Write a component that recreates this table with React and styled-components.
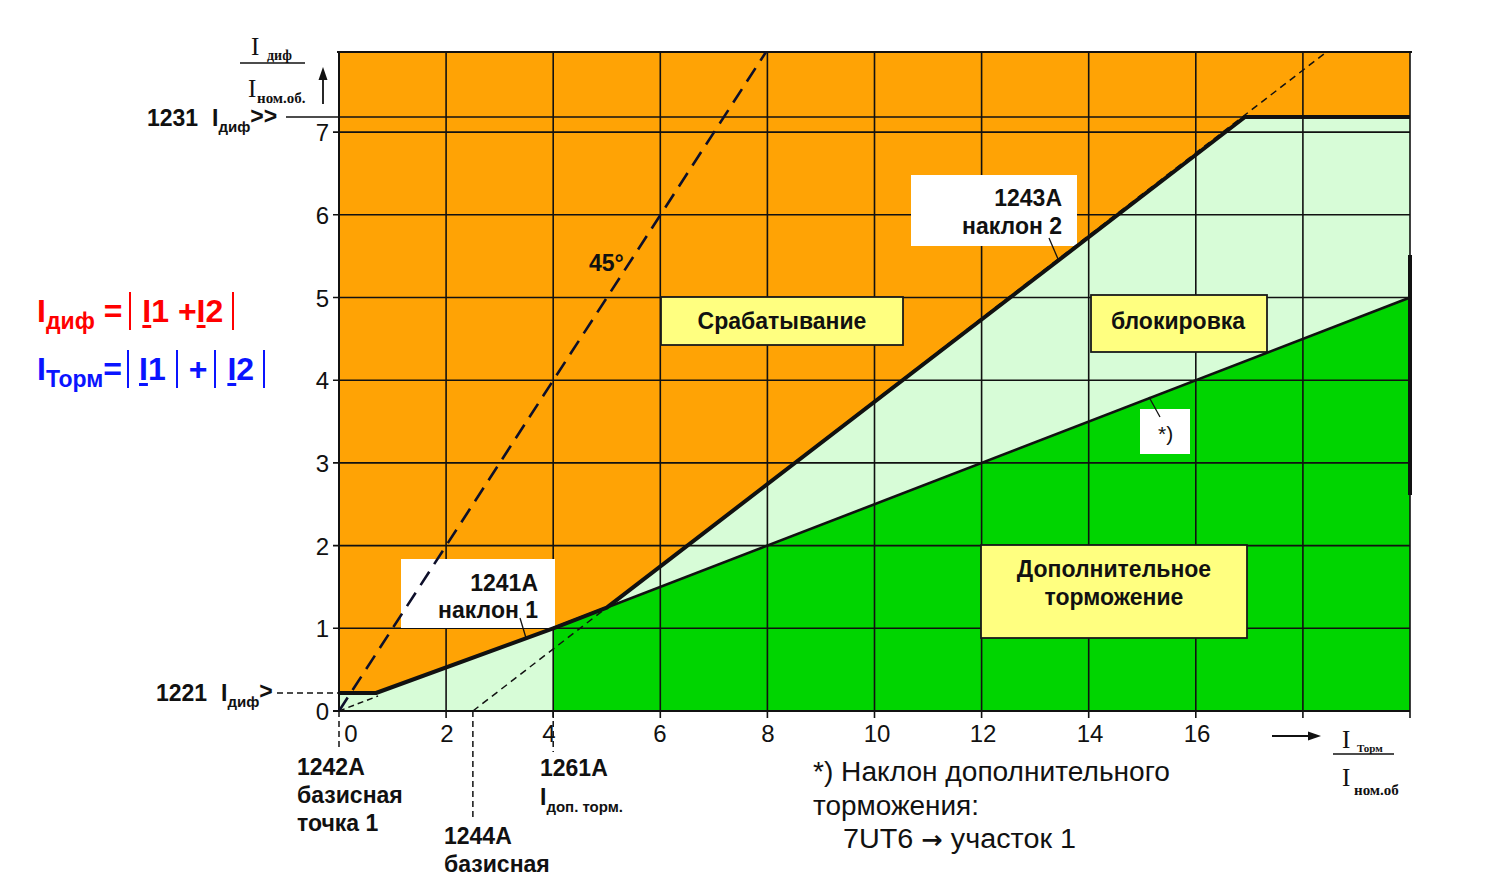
import React from 'react';
import styled, { createGlobalStyle } from 'styled-components';

const X = u => 339 + u * 53.55;
const Y = v => 711 - v * 82.7;

const ORANGE = '#FFA305';
const PALE = '#D7FCD7';
const GREEN = '#00D500';
const YELLOW = '#FFFF80';

const GlobalStyle = createGlobalStyle`
  html, body {
    margin: 0;
    padding: 0;
    background: #fff;
  }
`;

// chart and formula column share one grid cell
const Page = styled.div`
  width: 1486px;
  height: 885px;
  display: grid;
  grid-template: 885px / 1486px;
  overflow: hidden;
  background: #fff;
  font-family: "Liberation Sans", Arial, sans-serif;

  & > * {
    grid-area: 1 / 1;
  }
`;

const FormulaPanel = styled.div`
  width: 280px;
  padding: 291px 0 0 37px;
  box-sizing: border-box;
  display: flex;
  flex-direction: column;
  gap: 18px;
  z-index: 1;
`;

const Formula = styled.div`
  color: ${p => p.$color};
  font: bold 32px "Liberation Sans", Arial, sans-serif;
  height: 40px;
  line-height: 40px;
  white-space: pre;
`;

const Sub = styled.span`
  font-size: 23px;
  vertical-align: -7px;
  line-height: 0;
`;

const Vec = styled.span`
  text-decoration: underline;
  text-decoration-thickness: 3px;
  text-underline-offset: 3px;
`;

const Bar = styled.span`
  display: inline-block;
  width: 0;
  height: 38px;
  border-left: 2px solid currentColor;
  vertical-align: -8px;
  margin: 0 ${p => p.$space ?? 10}px 0 ${p => p.$lead ?? 6}px;
`;

const Chart = styled.svg`
  display: block;
`;

const TickLabel = styled.text`
  font: 24px "Liberation Sans", Arial, sans-serif;
  fill: #111;
`;

const BoldLabel = styled.text`
  font: bold 23px "Liberation Sans", Arial, sans-serif;
  fill: #111;
`;

const NoteText = styled.text`
  font: 27px "Liberation Sans", Arial, sans-serif;
  fill: #111;
`;

const SerifText = styled.text`
  font: 25px "Liberation Serif", "Times New Roman", serif;
  fill: #111;
`;

const GridLine = styled.line`
  stroke: #111;
  stroke-width: ${p => p.$w || 1.6};
`;

const Dashed = styled.line`
  stroke: ${p => p.$color || '#111'};
  stroke-width: ${p => p.$w || 1.4};
  stroke-dasharray: ${p => p.$dash || '6 5'};
`;

const LabelBox = styled.rect`
  fill: ${p => p.$fill};
  stroke: ${p => (p.$outlined ? '#1a1a1a' : 'none')};
  stroke-width: 1.8;
`;

const Leader = styled.line`
  stroke: #111;
  stroke-width: 1.3;
`;

const xTicks = [2, 4, 6, 8, 10, 12, 14, 16, 18];
const yTicks = [1, 2, 3, 4, 5, 6, 7];
const xLabels = [
  [0, 351], [2, 447], [4, 549], [6, 660], [8, 768],
  [10, 877], [12, 983], [14, 1090], [16, 1197]
];

const paleArea = [
  [339, 711], [339, 693], [376, 693], [X(4), Y(1)], [X(5), Y(1.25)],
  [1245, 117], [1410, 117], [1410, 711]
];
const greenArea = [[X(4), 711], [X(4), Y(1)], [1410, Y(5)], [1410, 711]];
const characteristic = [
  [339, 693], [376, 693], [X(4), Y(1)], [X(5), Y(1.25)], [1245, 117], [1410, 117]
];
const pts = list => list.map(p => p.join(',')).join(' ');

const FormulaBlock = () => (
  <FormulaPanel>
    <Formula $color="#FF0000">
      I<Sub>диф</Sub> =<Bar $lead={7} $space={11} /><Vec>I</Vec>1 +<Vec>I</Vec>2<Bar $lead={9} />
    </Formula>
    <Formula $color="#0A14FF">
      I<Sub>Торм</Sub>=<Bar $lead={5} $space={10} /><Vec>I</Vec>1<Bar $lead={10} $space={11} />+<Bar $lead={7} $space={11} /><Vec>I</Vec>2<Bar $lead={9} />
    </Formula>
  </FormulaPanel>
);

const CalloutBox = ({ x, y, w, h, fill, outlined, lines, anchor = 'middle', tx, ty, lh = 28 }) => (
  <g>
    <LabelBox x={x} y={y} width={w} height={h} $fill={fill} $outlined={outlined} />
    <BoldLabel textAnchor={anchor}>
      {lines.map((line, i) => (
        <tspan key={line} x={tx} y={ty + i * lh}>{line}</tspan>
      ))}
    </BoldLabel>
  </g>
);

const App = () => (
  <>
    <GlobalStyle />
    <Page>
      <Chart width="1486" height="885" viewBox="0 0 1486 885">
        {/* regions */}
        <rect x="339" y="52" width="1071" height="659" fill={ORANGE} />
        <polygon points={pts(paleArea)} fill={PALE} />
        <polygon points={pts(greenArea)} fill={GREEN} />

        {/* grid */}
        {xTicks.map(u => (
          <GridLine key={'v' + u} x1={X(u)} y1="52" x2={X(u)} y2="718" />
        ))}
        {yTicks.map(v => (
          <GridLine key={'h' + v} x1="333" y1={Y(v)} x2="1410" y2={Y(v)} />
        ))}
        <GridLine x1="286" y1="117" x2="1410" y2="117" />
        <GridLine x1="337" y1="52" x2="1412" y2="52" $w={2} />
        <GridLine x1="339" y1="52" x2="339" y2="711" $w={2} />
        <GridLine x1="333" y1="711" x2="1410" y2="711" $w={2} />
        <GridLine x1="1410" y1="52" x2="1410" y2="718" $w={1.6} />
        <GridLine x1="1410" y1="255" x2="1410" y2="495" $w={4} />

        {/* label boxes on the chart */}
        <CalloutBox x={911} y={175} w={166} h={71} fill="#fff" anchor="end"
          tx={1062} ty={206} lines={['1243A', 'наклон 2']} />
        <CalloutBox x={401} y={559} w={154} h={69} fill="#fff" anchor="end"
          tx={538} ty={591} lh={27} lines={['1241A', 'наклон 1']} />
        <CalloutBox x={661} y={297} w={242} h={48} fill={YELLOW} outlined
          tx={782} ty={329} lines={['Срабатывание']} />
        <CalloutBox x={1091} y={295} w={176} h={57} fill={YELLOW} outlined
          tx={1178} ty={329} lines={['блокировка']} />
        <CalloutBox x={981} y={545} w={266} h={93} fill={YELLOW} outlined
          tx={1114} ty={577} lh={28} lines={['Дополнительное', 'торможение']} />
        <LabelBox x={1140} y={409} width={50} height={45} $fill="#fff" />
        <TickLabel x="1158" y="441" style={{ fontSize: 21 }}>*)</TickLabel>

        {/* leaders */}
        <Leader x1="1049" y1="238" x2="1058" y2="259" />
        <Leader x1="520" y1="618" x2="526" y2="638" />
        <Leader x1="1149" y1="397" x2="1160" y2="417" />

        {/* boundary lines */}
        <line x1={X(4)} y1={Y(1)} x2="1410" y2={Y(5)} stroke="#111" strokeWidth="2.6" />
        <polyline points={pts(characteristic)} fill="none" stroke="#111" strokeWidth="4" strokeLinejoin="round" />

        {/* dashed helpers */}
        <Dashed x1="339" y1="711" x2="766" y2="52" $w={2.6} $dash="16 9" $color="#0d0f2a" />
        <Dashed x1={X(2.5)} y1="711" x2={X(18.44)} y2="52" $w={1.5} $dash="7 5" />
        <Dashed x1="339" y1="711" x2="378" y2="696" $w={1.5} $dash="6 4" />
        <Dashed x1="277" y1="693" x2="339" y2="693" $w={1.3} $dash="6 4" />
        <Dashed x1="339" y1="711" x2="339" y2="750" $w={1.5} $dash="6 4" />
        <Dashed x1={X(2.5)} y1="711" x2={X(2.5)} y2="820" $w={1.5} $dash="6 4" />
        <Dashed x1={X(4)} y1="711" x2={X(4)} y2="752" $w={1.5} $dash="6 4" />

        {/* 45 degree */}
        <BoldLabel x="589" y="271">45°</BoldLabel>

        {/* axis numbers */}
        {[0, ...yTicks].map(v => (
          <TickLabel key={'yl' + v} x="329" y={Y(v) + 9} textAnchor="end">{v}</TickLabel>
        ))}
        {xLabels.map(([u, cx]) => (
          <TickLabel key={'xl' + u} x={cx} y="742" textAnchor="middle">{u}</TickLabel>
        ))}

        {/* y axis title */}
        <SerifText x="251" y="55">I</SerifText>
        <SerifText x="267" y="60" style={{ fontSize: 14, fontWeight: 'bold' }}>диф</SerifText>
        <line x1="240" y1="63" x2="305" y2="63" stroke="#111" strokeWidth="1.3" />
        <SerifText x="248" y="97">I</SerifText>
        <SerifText x="257" y="103" style={{ fontSize: 15, fontWeight: 'bold' }}>ном.об.</SerifText>
        <line x1="323" y1="104" x2="323" y2="78" stroke="#111" strokeWidth="1.8" />
        <polygon points="323,67 318.5,80 327.5,80" fill="#111" />

        {/* x axis title */}
        <line x1="1272" y1="736" x2="1310" y2="736" stroke="#111" strokeWidth="1.8" />
        <polygon points="1321,736 1308,731.5 1308,740.5" fill="#111" />
        <SerifText x="1342" y="748">I</SerifText>
        <SerifText x="1357" y="752" style={{ fontSize: 11, fontWeight: 'bold' }}>Торм</SerifText>
        <line x1="1333" y1="754" x2="1394" y2="754" stroke="#111" strokeWidth="1.3" />
        <SerifText x="1342" y="786">I</SerifText>
        <SerifText x="1354" y="795" style={{ fontSize: 15, fontWeight: 'bold' }}>ном.об</SerifText>

        {/* setting addresses */}
        <BoldLabel x="147" y="126">
          1231
          <tspan x="212">I</tspan>
          <tspan dy="6" style={{ fontSize: 15 }}>диф</tspan>
          <tspan dy="-8">&gt;&gt;</tspan>
        </BoldLabel>
        <BoldLabel x="156" y="701">
          1221
          <tspan x="221">I</tspan>
          <tspan dy="6" style={{ fontSize: 15 }}>диф</tspan>
          <tspan dy="-8">&gt;</tspan>
        </BoldLabel>
        <BoldLabel>
          <tspan x="297" y="775">1242A</tspan>
          <tspan x="297" y="803">базисная</tspan>
          <tspan x="297" y="831">точка 1</tspan>
        </BoldLabel>
        <BoldLabel>
          <tspan x="444" y="844">1244A</tspan>
          <tspan x="444" y="872">базисная</tspan>
        </BoldLabel>
        <BoldLabel>
          <tspan x="540" y="776">1261A</tspan>
          <tspan x="540" y="805">I</tspan>
          <tspan dy="7" style={{ fontSize: 15 }}>доп. торм.</tspan>
        </BoldLabel>

        {/* footnote */}
        <NoteText x="813" y="781" textLength="357" lengthAdjust="spacingAndGlyphs">*) Наклон дополнительного</NoteText>
        <NoteText x="813" y="815" textLength="166" lengthAdjust="spacingAndGlyphs">торможения:</NoteText>
        <NoteText x="843" y="848" textLength="233" lengthAdjust="spacingAndGlyphs">
          7UT6 <tspan style={{ fontFamily: '"DejaVu Sans", sans-serif', fontSize: 24, fontWeight: 'bold' }}>→</tspan> участок 1
        </NoteText>
      </Chart>
      <FormulaBlock />
    </Page>
  </>
);

export default App;
